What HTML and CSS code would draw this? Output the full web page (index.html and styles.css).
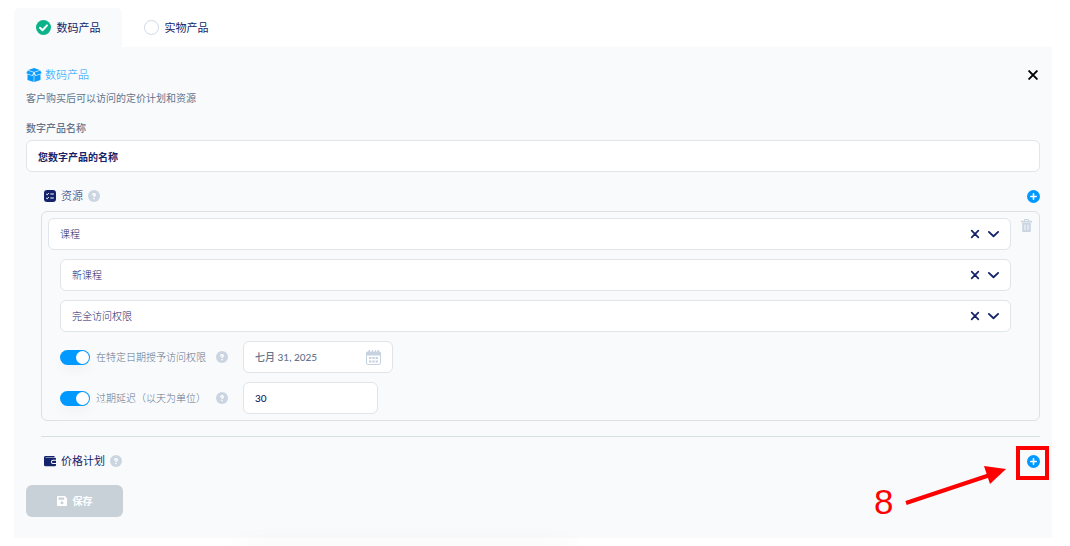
FILE: index.html
```html
<!DOCTYPE html>
<html lang="zh-CN">
<head>
    <meta charset="UTF-8">
    <meta name="viewport" content="width=device-width, initial-scale=1.0">
    <title>数码产品</title>
    <link rel="stylesheet" href="styles.css">
</head>
<body>

    <svg class="sprite" width="0" height="0" aria-hidden="true">
        <symbol id="plus" viewBox="0 0 13 13">
            <circle cx="6.5" cy="6.5" r="6.5" fill="#0099ff"/>
            <path d="M6.5 3.8v5.4M3.8 6.5h5.4" stroke="#fff" stroke-width="1.6" stroke-linecap="round"/>
        </symbol>
        <symbol id="help" viewBox="0 0 12 12">
            <circle cx="6" cy="6" r="6" fill="#cbd5e1"/>
            <path d="M4.700 4.700C4.700 3.200 7.300 3.200 7.300 4.700C7.300 5.600 6 5.600 6 6.600" fill="none" stroke="#fff" stroke-width="1.4" stroke-linecap="round"/>
            <circle cx="6" cy="8.6" r=".8" fill="#fff"/>
        </symbol>
        <symbol id="cross" viewBox="0 0 12 12">
            <path d="M2.700 2.700l6.600 6.600M9.300 2.700L2.700 9.300" stroke="currentColor" stroke-width="1.700" stroke-linecap="round"/>
        </symbol>
        <symbol id="chevron" viewBox="0 0 12 12">
            <path d="M1.700 3.600L6 7.600l4.300-4" fill="none" stroke="currentColor" stroke-width="1.7" stroke-linecap="round" stroke-linejoin="round"/>
        </symbol>
    </svg>

    <nav class="tabs">
        <button type="button" class="tab active">
            <svg width="15" height="15" viewBox="0 0 15 15">
                <circle cx="7.5" cy="7.5" r="7.500" fill="#0bb38a"/>
                <path d="M4 7.800l2.500 2.400L11 5.400" fill="none" stroke="#fff" stroke-width="2" stroke-linecap="round" stroke-linejoin="round"/>
            </svg>
            数码产品
        </button>
        <button type="button" class="tab">
            <svg width="15" height="15" viewBox="0 0 15 15">
                <circle cx="7.5" cy="7.5" r="7" fill="#fff" stroke="#cfd8e6"/>
            </svg>
            实物产品
        </button>
    </nav>

    <form class="panel">
        <header class="panel-head">
            <svg width="16" height="14" viewBox="0 0 16 14" fill="#0c9cff">
                <path d="M8 0l5.800 2L8 4 2.200 2z"/>
                <path d="M1.800 2.600L7.500 4.600 6.100 7.200.3 5.200z"/>
                <path d="M14.200 2.600L8.500 4.600l1.400 2.600 5.800-2z"/>
                <path d="M1.500 6.300l5 1.700 1.200-2V14l-6.200-2z"/>
                <path d="M14.500 6.300l-5 1.700-1.200-2V14l6.200-2z"/>
            </svg>
            <h1>数码产品</h1>
            <button type="button" class="icon-btn close" aria-label="关闭">
                <svg width="14" height="14"><use href="#cross"/></svg>
            </button>
        </header>
        <p class="description">客户购买后可以访问的定价计划和资源</p>

        <label class="name-label" for="product_name">数字产品名称</label>
        <input type="text" class="field name-input" id="product_name" value="您数字产品的名称">

        <section class="section">
            <div class="section-head">
                <svg width="12" height="12" viewBox="0 0 12 12">
                    <rect width="12" height="12" rx="3" fill="#15246a"/>
                    <path d="M2.200 4l1 .8 1.600-1.800M2.200 8l1 .8 1.600-1.800M6.300 4h3.500M6.300 8h3.500" fill="none" stroke="#fff"/>
                </svg>
                <h2 class="light">资源</h2>
                <svg width="12" height="12"><use href="#help"/></svg>
                <button type="button" class="icon-btn add" aria-label="添加资源">
                    <svg width="13" height="13"><use href="#plus"/></svg>
                </button>
            </div>

            <div class="resource">
                <div class="resource-fields">
                    <div class="field select">
                        <select aria-label="资源类型"><option>课程</option></select>
                        <button type="button" class="icon-btn" aria-label="清除"><svg width="12" height="12"><use href="#cross"/></svg></button>
                        <svg width="13" height="13"><use href="#chevron"/></svg>
                    </div>
                    <div class="field select sub">
                        <select aria-label="课程"><option>新课程</option></select>
                        <button type="button" class="icon-btn" aria-label="清除"><svg width="12" height="12"><use href="#cross"/></svg></button>
                        <svg width="13" height="13"><use href="#chevron"/></svg>
                    </div>
                    <div class="field select sub">
                        <select aria-label="访问权限"><option>完全访问权限</option></select>
                        <button type="button" class="icon-btn" aria-label="清除"><svg width="12" height="12"><use href="#cross"/></svg></button>
                        <svg width="13" height="13"><use href="#chevron"/></svg>
                    </div>

                    <div class="option sub">
                        <input type="checkbox" class="switch" id="grant_date" checked>
                        <label for="grant_date">在特定日期授予访问权限</label>
                        <svg width="12" height="12"><use href="#help"/></svg>
                        <div class="field date">
                            <input type="text" aria-label="日期" value="七月 31, 2025">
                            <svg width="15" height="15" viewBox="0 0 15 15">
                                <path d="M1.500 1.500H2.500V0h1.500v1.500h2V0h1v1.500h2V0h1v1.500h1.500V0H13v1.500h.5A1.500 1.500 0 0 1 15 3v2.500H0V3a1.500 1.500 0 0 1 1.500-1.500z" fill="#c6d2df"/>
                                <path d="M.5 5v8a1.500 1.500 0 0 0 1.500 1.500h11a1.500 1.500 0 0 0 1.500-1.500V5" fill="none" stroke="#c6d2df"/>
                                <path d="M3 8h9M3 11.500h9" stroke="#c6d2df" stroke-width="1.800" stroke-dasharray="2.400 .9"/>
                            </svg>
                        </div>
                    </div>
                    <div class="option sub">
                        <input type="checkbox" class="switch" id="expiry" checked>
                        <label for="expiry">过期延迟（以天为单位）</label>
                        <svg width="12" height="12"><use href="#help"/></svg>
                        <input type="text" class="field days" aria-label="天数" value="30">
                    </div>
                </div>
                <button type="button" class="icon-btn trash" aria-label="删除">
                    <svg width="11" height="13" viewBox="0 0 11 13">
                        <path d="M3.500 2V.5h4V2" fill="none" stroke="#cbd5e1"/>
                        <path d="M0 1.800h11v1.700H0z" fill="#cbd5e1"/>
                        <path d="M1.200 4h8.600V12a1 1 0 0 1-1 1H2.200a1 1 0 0 1-1-1z" fill="#cbd5e1"/>
                        <path d="M4 5.500v5.500M7 5.500v5.500" stroke="#f8fafc"/>
                    </svg>
                </button>
            </div>
        </section>

        <section class="section plans">
            <div class="section-head">
                <svg width="12" height="12" viewBox="0 0 12 12">
                    <path d="M2 1h8.500v1.200H1.500v.6H11a1 1 0 0 1 1 1v1H9a2 2 0 0 0 0 4.200h3V10a1.200 1.200 0 0 1-1.200 1.200H1.500A1.500 1.500 0 0 1 0 9.700V2.500A1.500 1.500 0 0 1 2 1z" fill="#15246a"/>
                    <path d="M12 5.800H9a1 1 0 0 0 0 2.200h3z" fill="#15246a"/>
                </svg>
                <h2>价格计划</h2>
                <svg width="12" height="12"><use href="#help"/></svg>
                <button type="button" class="icon-btn add" aria-label="添加价格计划">
                    <svg width="13" height="13"><use href="#plus"/></svg>
                </button>
                <svg class="callout" width="177" height="76" viewBox="0 0 177 76">
                    <rect x="146" y="2" width="29" height="30" fill="none" stroke="#fe0000" stroke-width="4"/>
                    <path d="M34 57L118 29" stroke="#fe0000" stroke-width="4"/>
                    <path d="M134 23L112 20l6 18z" fill="#fe0000"/>
                    <text x="2" y="68">8</text>
                </svg>
            </div>
        </section>

        <button type="submit" class="save" disabled>
            <svg width="10" height="10" viewBox="0 0 10 10">
                <path fill-rule="evenodd" d="M1 0h6.800L10 2.200V9a1 1 0 0 1-1 1H1a1 1 0 0 1-1-1V1a1 1 0 0 1 1-1zM1.500 1.500v2.300h5.700V1.500zM5 5.300a1.500 1.500 0 1 0 0 3 1.500 1.500 0 0 0 0-3z" fill="#fff"/>
            </svg>
            保存
        </button>
    </form>

</body>
</html>
```
FILE: styles.css
```css
* {
    box-sizing: border-box;
}
body {
    margin: 0;
    padding: 8px 18px 8px 14px;
    background: #fff;
    color: #15246a;
    font-family: Lato, "Noto Sans CJK SC", sans-serif;
    font-size: 10px;
    line-height: 16px;
    overflow: hidden;
}
body::after {
    content: "";
    position: fixed;
    left: 240px;
    bottom: -24px;
    width: 330px;
    height: 20px;
    box-shadow: 0 0 30px rgba(0, 0, 0, 0.06);
}
button, input, select {
    font: inherit;
    color: inherit;
}
h1, h2, p {
    margin: 0;
}
svg {
    flex: none;
    display: block;
}
.sprite {
    position: absolute;
}

.tabs {
    display: flex;
}
.tab {
    display: flex;
    align-items: center;
    justify-content: center;
    gap: 6px;
    width: 108px;
    height: 39px;
    padding: 0;
    border: none;
    border-radius: 5px 5px 0 0;
    background: none;
    font-size: 11px;
    cursor: pointer;
}
.tab.active {
    background: #f8fafc;
}

.panel {
    padding: 20px 12px 21px;
    background: #f8fafc;
}
.panel-head {
    display: flex;
    align-items: center;
    gap: 3px;
    height: 16px;
    color: #0c9cff;
}
.panel-head h1 {
    font-size: 11px;
    font-weight: 300;
}
.description {
    margin-top: 7px;
    color: #64748b;
}
.name-label {
    display: block;
    margin: 14px 0 4px;
    color: #64748b;
    font-weight: 500;
}
.icon-btn {
    display: flex;
    padding: 0;
    border: none;
    background: none;
    cursor: pointer;
}
.close {
    margin-left: auto;
    color: #000;
}

.field {
    height: 32px;
    padding: 0 11px;
    border: 1px solid #dfe5e8;
    border-radius: 6px;
    background: #fff;
}
.name-input {
    display: block;
    width: 100%;
    font-weight: 700;
}

.section {
    margin: 16px 0 0 15px;
}
.section-head {
    position: relative;
    display: flex;
    align-items: center;
    gap: 5px;
    height: 16px;
    padding-left: 3px;
}
.section-head h2 {
    font-size: 11px;
    font-weight: 400;
}
.section-head h2.light {
    font-weight: 300;
}
.add {
    margin-left: auto;
}

.resource {
    display: flex;
    align-items: flex-start;
    gap: 10px;
    margin-top: 7px;
    padding: 6px 7px 6px 6px;
    border: 1px solid #dbe2e6;
    border-radius: 6px;
}
.resource-fields {
    flex: 1;
    display: grid;
    gap: 9px;
}
.sub {
    margin-left: 12px;
}
.trash {
    margin-top: 1px;
}
.select {
    display: flex;
    align-items: center;
    gap: 6px;
    padding-right: 10px;
}
.select select {
    flex: 1;
    appearance: none;
    padding: 0;
    border: none;
    background: none;
    font-weight: 300;
}

.option {
    display: flex;
    align-items: center;
    height: 32px;
    color: #64748b;
    font-weight: 300;
}
.option label {
    width: 120px;
    margin-left: 6px;
}
.option .field {
    margin-left: 15px;
}
.switch {
    appearance: none;
    flex: none;
    width: 30px;
    height: 15px;
    margin: 0;
    padding: 1px 1px 1px 16px;
    border-radius: 8px;
    background: #0099ff;
    box-shadow: 0 6px 12px rgba(0, 0, 0, 0.03);
}
.switch::before {
    content: "";
    display: block;
    width: 13px;
    height: 13px;
    border-radius: 50%;
    background: #fff;
}
.date {
    display: flex;
    align-items: center;
    width: 150px;
}
.date input {
    flex: 1;
    min-width: 0;
    padding: 0;
    border: none;
    background: none;
    font-weight: 500;
}
.days {
    width: 135px;
    color: #15246a;
    font-weight: 500;
}

.plans {
    margin-top: 15px;
    padding-top: 16px;
    border-top: 1px solid #d6e0e4;
}
.callout {
    position: absolute;
    top: -7px;
    right: -9px;
    pointer-events: none;
}
.callout text {
    fill: #fe0000;
    font-family: "Liberation Sans", Arial, sans-serif;
    font-size: 35px;
}

.save {
    display: flex;
    align-items: center;
    justify-content: center;
    gap: 6px;
    width: 97px;
    height: 32px;
    margin-top: 16px;
    border: none;
    border-radius: 6px;
    background: #c8d0d8;
    color: #fff;
    font-weight: 700;
}
```
